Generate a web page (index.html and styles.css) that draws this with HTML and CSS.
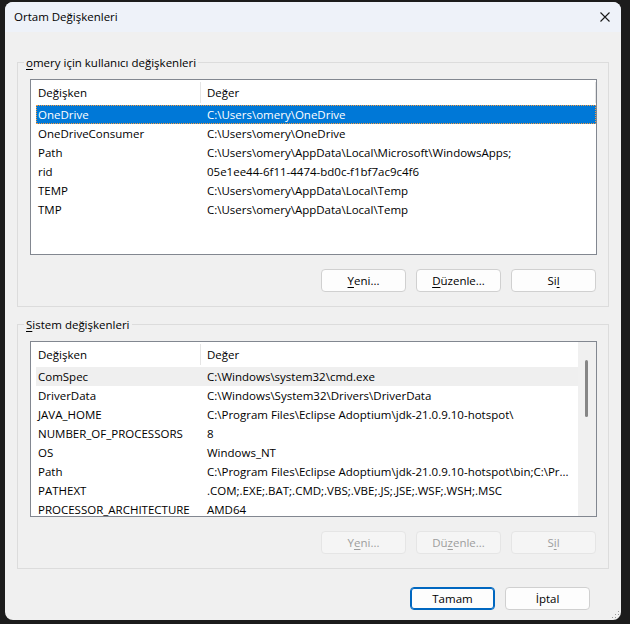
FILE: index.html
```html
<!DOCTYPE html>
<html lang="tr">
<head>
<meta charset="utf-8">
<title>Ortam Değişkenleri</title>
<link rel="stylesheet" href="styles.css">
</head>
<body>
<div class="dialog">
  <div class="titlebar">
    <span class="title">Ortam Değişkenleri</span>
    <div class="close">
      <svg width="10" height="10" viewBox="0 0 10 10"><path d="M0.5 0.5L9.5 9.5M9.5 0.5L0.5 9.5" stroke="#1a1a1a" stroke-width="1.1" fill="none"/></svg>
    </div>
  </div>

  <div class="content">
    <section class="group">
      <span class="legend"><u>o</u>mery için kullanıcı değişkenleri</span>
      <div class="list">
        <div class="list-main">
          <div class="header">
            <div class="hcell c1">Değişken</div>
            <div class="hcell c2 end">Değer</div>
          </div>
          <div class="row selected"><span class="c1">OneDrive</span><span class="c2">C:\Users\omery\OneDrive</span></div>
          <div class="row"><span class="c1">OneDriveConsumer</span><span class="c2">C:\Users\omery\OneDrive</span></div>
          <div class="row"><span class="c1">Path</span><span class="c2">C:\Users\omery\AppData\Local\Microsoft\WindowsApps;</span></div>
          <div class="row"><span class="c1">rid</span><span class="c2">05e1ee44-6f11-4474-bd0c-f1bf7ac9c4f6</span></div>
          <div class="row"><span class="c1">TEMP</span><span class="c2">C:\Users\omery\AppData\Local\Temp</span></div>
          <div class="row"><span class="c1">TMP</span><span class="c2">C:\Users\omery\AppData\Local\Temp</span></div>
        </div>
      </div>
      <div class="buttons">
        <button class="btn"><u>Y</u>eni...</button>
        <button class="btn"><u>D</u>üzenle...</button>
        <button class="btn">Si<u>l</u></button>
      </div>
    </section>

    <section class="group">
      <span class="legend"><u>S</u>istem değişkenleri</span>
      <div class="list">
        <div class="list-main">
          <div class="header">
            <div class="hcell c1">Değişken</div>
            <div class="hcell c2">Değer</div>
          </div>
          <div class="row hot"><span class="c1">ComSpec</span><span class="c2">C:\Windows\system32\cmd.exe</span></div>
          <div class="row"><span class="c1">DriverData</span><span class="c2">C:\Windows\System32\Drivers\DriverData</span></div>
          <div class="row"><span class="c1">JAVA_HOME</span><span class="c2">C:\Program Files\Eclipse Adoptium\jdk-21.0.9.10-hotspot\</span></div>
          <div class="row"><span class="c1">NUMBER_OF_PROCESSORS</span><span class="c2">8</span></div>
          <div class="row"><span class="c1">OS</span><span class="c2">Windows_NT</span></div>
          <div class="row"><span class="c1">Path</span><span class="c2">C:\Program Files\Eclipse Adoptium\jdk-21.0.9.10-hotspot\bin;C:\Pr...</span></div>
          <div class="row"><span class="c1">PATHEXT</span><span class="c2">.COM;.EXE;.BAT;.CMD;.VBS;.VBE;.JS;.JSE;.WSF;.WSH;.MSC</span></div>
          <div class="row"><span class="c1">PROCESSOR_ARCHITECTURE</span><span class="c2">AMD64</span></div>
        </div>
        <div class="vscroll"><div class="thumb"></div></div>
      </div>
      <div class="buttons">
        <button class="btn" disabled>Y<u>e</u>ni...</button>
        <button class="btn" disabled>Dü<u>z</u>enle...</button>
        <button class="btn" disabled>S<u>i</u>l</button>
      </div>
    </section>

    <div class="footer">
      <button class="btn default">Tamam</button>
      <button class="btn">İptal</button>
    </div>
  </div>

  <svg class="grip" width="10" height="10" viewBox="0 0 10 10">
    <g fill="#9a9a9a">
      <rect x="8" y="2" width="1" height="1"/>
      <rect x="5" y="5" width="1" height="1"/><rect x="8" y="5" width="1" height="1"/>
      <rect x="2" y="8" width="1" height="1"/><rect x="5" y="8" width="1" height="1"/><rect x="8" y="8" width="1" height="1"/>
    </g>
  </svg>
</div>
</body>
</html>
```
FILE: styles.css
```css
* {
  box-sizing: border-box;
}

html, body {
  margin: 0;
}

body {
  width: 630px;
  height: 624px;
  overflow: hidden;
  padding: 2px 0 0 5px;
  background: #1c1c1c;
  font-family: "Open Sans", "Noto Sans", sans-serif;
  font-size: 11.5px;
  line-height: 16px;
  color: #000;
}

/* window frame */
.dialog {
  position: relative;
  width: 616px;
  height: 618px;
  background: #f0f0f0;
  border-radius: 8px;
  overflow: hidden;
  display: flex;
  flex-direction: column;
}

.titlebar {
  flex: none;
  height: 30px;
  background: #eef2f9;
  display: flex;
  align-items: center;
  padding-left: 9px;
}

.title {
  flex: 1;
}

.close {
  width: 32px;
  height: 30px;
  display: flex;
  align-items: center;
  justify-content: center;
}

.close svg {
  display: block;
}

.content {
  padding: 30px 12px 0;
  display: flex;
  flex-direction: column;
}

/* group boxes */
.group {
  position: relative;
  height: 245px;
  border: 1px solid #dcdcdc;
  padding: 16px 11px 14px 12px;
}

.group + .group {
  margin-top: 17px;
}

.legend {
  position: absolute;
  top: -8px;
  left: 6px;
  padding: 0 2px;
  background: #f0f0f0;
  white-space: nowrap;
}

u {
  text-decoration-thickness: 1px;
  text-underline-offset: 2px;
}

/* list views */
.list {
  height: 176px;
  border: 1px solid #828790;
  background: #fff;
  display: flex;
  overflow: hidden;
}

.list-main {
  flex: 1;
  min-width: 0;
  overflow: hidden;
}

.header {
  height: 25px;
  display: flex;
}

.hcell {
  position: relative;
  display: flex;
  align-items: center;
  white-space: nowrap;
}

.hcell.c1 {
  width: 170px;
  padding-left: 7px;
}

.hcell.c1::after,
.hcell.end::after {
  content: "";
  position: absolute;
  right: 0;
  top: 2px;
  bottom: 2px;
  width: 1px;
  background: #e5e5e5;
}

.hcell.c2 {
  flex: 1;
  padding-left: 6px;
}

.row {
  height: 19px;
  margin-left: 5px;
  display: flex;
  align-items: center;
  white-space: nowrap;
}

.row .c1 {
  flex: none;
  width: 165px;
  padding-left: 2px;
  overflow: hidden;
}

.row .c2 {
  flex: 1;
  padding-left: 6px;
  overflow: hidden;
}

.row.selected {
  background: #0078d7;
  color: #fff;
  outline: 1px dotted #f79a3e;
  outline-offset: -1px;
}

.row.hot {
  background: #efefef;
}

.vscroll {
  flex: none;
  width: 18px;
  background: #f0f0f0;
  padding: 18px 0 0 7px;
}

.thumb {
  width: 3px;
  height: 57px;
  border-radius: 2px;
  background: #868686;
}

/* push buttons */
.buttons,
.footer {
  display: flex;
  justify-content: flex-end;
  gap: 10px;
}

.buttons {
  margin-top: 14px;
  padding-right: 1px;
}

.footer {
  margin-top: 18px;
  padding-right: 19px;
}

.btn {
  width: 85px;
  height: 23px;
  padding: 0;
  border: 1px solid #d0d0d0;
  border-radius: 4px;
  background: #fdfdfd;
  font: inherit;
  color: #000;
  display: flex;
  align-items: center;
  justify-content: center;
}

.btn:disabled {
  background: #f5f5f5;
  border-color: #e5e5e5;
  color: #9d9d9d;
}

.btn.default {
  border-color: #0067c0;
  box-shadow: inset 0 0 0 1px #0067c0;
}

.grip {
  position: absolute;
  right: 1px;
  bottom: 1px;
}
```
